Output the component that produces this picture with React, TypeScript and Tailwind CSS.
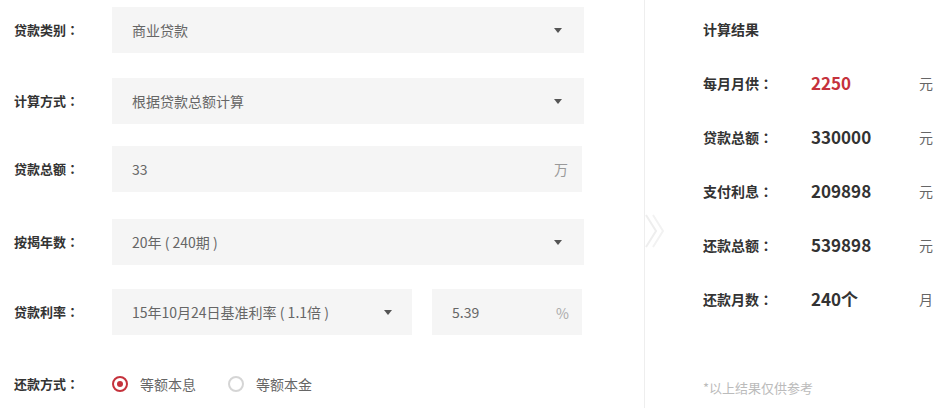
import React from "react";

const font = { fontFamily: '"Noto Sans CJK SC", "Noto Sans", sans-serif' };

function Colon() {
  return <span className="font-['Noto_Sans_CJK_TC',sans-serif]">：</span>;
}

function Arrow() {
  return (
    <svg width="8" height="5" viewBox="0 0 8 5" className="shrink-0">
      <path d="M0 0 L8 0 L4 5 Z" fill="#555" />
    </svg>
  );
}

function Label({ children }: { children: React.ReactNode }) {
  return (
    <div className="w-[98px] shrink-0 text-[13px] font-bold text-[#333]">
      {children}
      <Colon />
    </div>
  );
}

function SelectBox({ text, w = "w-[472px]" }: { text: React.ReactNode; w?: string }) {
  return (
    <div className={`${w} h-[46px] bg-[#f5f5f5] flex items-center justify-between pl-[20px] pr-[22px]`}>
      <span className="text-[14px] text-[#666]">{text}</span>
      <Arrow />
    </div>
  );
}

function ResultRow({ label, value, unit, red }: { label: string; value: string; unit: string; red?: boolean }) {
  return (
    <div className="flex items-center h-[20px]">
      <div className="w-[108px] text-[14px] font-bold text-[#333]">
        {label}
        <Colon />
      </div>
      <div className={`w-[108px] text-[17px] font-bold ${red ? "text-[#c5323c]" : "text-[#333]"}`}>{value}</div>
      <div className="text-[14px] text-[#666]">{unit}</div>
    </div>
  );
}

export default function App() {
  return (
    <div className="w-[948px] h-[408px] bg-white flex overflow-hidden" style={font}>
      <div className="w-[645px] shrink-0 border-r border-[#eeeeee] pl-[14px] pt-[7px]">
        <div className="flex items-center">
          <Label>贷款类别</Label>
          <SelectBox text="商业贷款" />
        </div>
        <div className="flex items-center mt-[25px]">
          <Label>计算方式</Label>
          <SelectBox text="根据贷款总额计算" />
        </div>
        <div className="flex items-center mt-[22px]">
          <Label>贷款总额</Label>
          <div className="w-[470px] h-[46px] bg-[#f5f5f5] flex items-center justify-between pl-[20px] pr-[14px]">
            <span className="text-[14px] text-[#666]">33</span>
            <span className="text-[14px] text-[#999]">万</span>
          </div>
        </div>
        <div className="flex items-center mt-[27px]">
          <Label>按揭年数</Label>
          <SelectBox text="20年 ( 240期 )" />
        </div>
        <div className="flex items-center mt-[24px]">
          <Label>贷款利率</Label>
          <div className="w-[300px] h-[46px] bg-[#f5f5f5] flex items-center justify-between pl-[20px] pr-[20px]">
            <span className="text-[14px] text-[#666]">15年10月24日基准利率 ( 1.1倍 )</span>
            <Arrow />
          </div>
          <div className="ml-[20px] w-[150px] h-[46px] bg-[#f5f5f5] flex items-center justify-between pl-[20px] pr-[13px]">
            <span className="text-[14px] text-[#666]">5.39</span>
            <span className="text-[14px] text-[#aaa] pt-[3px]">%</span>
          </div>
        </div>
        <div className="flex items-center mt-[39px] h-[20px]">
          <Label>还款方式</Label>
          <div className="flex items-center">
            <span className="w-[16px] h-[16px] rounded-full border-[2px] border-[#c5323c] flex items-center justify-center">
              <span className="w-[6px] h-[6px] rounded-full bg-[#c5323c]" />
            </span>
            <span className="ml-[12px] text-[14px] text-[#666]">等额本息</span>
          </div>
          <div className="flex items-center ml-[32px]">
            <span className="w-[16px] h-[16px] rounded-full border-[2px] border-[#d5d5d5]" />
            <span className="ml-[12px] text-[14px] text-[#666]">等额本金</span>
          </div>
        </div>
      </div>
      <div className="relative flex-1 pl-[58px] pt-[19px]">
        <svg className="absolute left-0 top-[214px]" width="20" height="34" viewBox="0 0 20 34">
          <path d="M1 1 L11 17 L1 33" fill="none" stroke="#eeeeee" strokeWidth="2" />
          <path d="M8 1 L18 17 L8 33" fill="none" stroke="#f2f2f2" strokeWidth="2" />
        </svg>
        <div className="text-[14px] font-bold text-[#333] h-[20px] leading-[20px]">计算结果</div>
        <div className="mt-[34px] flex flex-col gap-[34px]">
          <ResultRow label="每月月供" value="2250" unit="元" red />
          <ResultRow label="贷款总额" value="330000" unit="元" />
          <ResultRow label="支付利息" value="209898" unit="元" />
          <ResultRow label="还款总额" value="539898" unit="元" />
          <ResultRow label="还款月数" value="240个" unit="月" />
        </div>
        <div className="mt-[69px] text-[13px] text-[#bbb]">*以上结果仅供参考</div>
      </div>
    </div>
  );
}
